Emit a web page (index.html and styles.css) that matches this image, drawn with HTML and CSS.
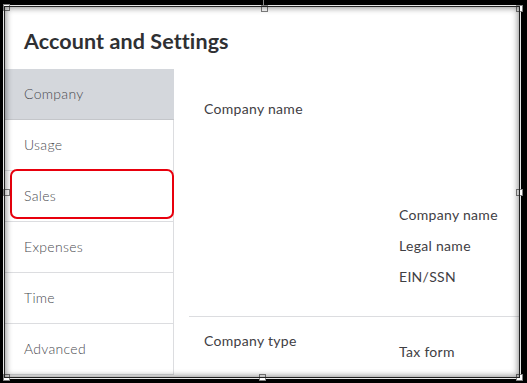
FILE: index.html
```html
<!DOCTYPE html>
<html lang="en">

<head>
    <meta charset="UTF-8">
    <title>Account and Settings</title>
    <link rel="stylesheet" href="styles.css">
</head>

<body>
    <div class="frame">
        <div class="window">
            <div class="header">
                <h1>Account and Settings</h1>
            </div>
            <div class="body">
                <ul class="nav">
                    <li class="active">Company</li>
                    <li>Usage</li>
                    <li class="marked">Sales <span class="annotation"></span></li>
                    <li>Expenses</li>
                    <li>Time</li>
                    <li>Advanced</li>
                </ul>
                <div class="main">
                    <div class="section first">
                        <div class="label">Company name</div>
                        <div class="fields">
                            <div>Company name</div>
                            <div>Legal name</div>
                            <div>EIN/SSN</div>
                        </div>
                    </div>
                    <div class="section second">
                        <div class="label">Company type</div>
                        <div class="fields">
                            <div>Tax form</div>
                        </div>
                    </div>
                </div>
            </div>
        </div>
        <span class="handle tl"></span>
        <span class="handle tm"></span>
        <span class="handle tr"></span>
        <span class="handle ml"></span>
        <span class="handle mr"></span>
        <span class="handle bl"></span>
        <span class="handle bm"></span>
        <span class="handle br"></span>
    </div>
</body>

</html>
```

FILE: styles.css
```css
* {
  box-sizing: border-box;
}

html, body {
  margin: 0;
  height: 100%;
  background: #000;
}

body {
  padding: 5px 6px 4px 3px;
  font: normal 14px/20px Lato, "Open Sans", sans-serif;
  letter-spacing: 0.3px;
  color: #3f4044;
}

.frame {
  position: relative;
  height: 374px;
  border: 1px solid #e6e6e6;
  background: #fff;
}
.frame::before {
  content: "";
  position: absolute;
  left: 259px;
  top: -6px;
  width: 1px;
  height: 6px;
  background: #888;
}
.frame::after {
  content: "";
  position: absolute;
  top: 0;
  right: 0;
  bottom: 0;
  left: 0;
  box-shadow: inset 0 0 0 1px #222, inset 0 0 6px 2px rgba(0, 0, 0, 0.45);
  pointer-events: none;
}

.window {
  height: 100%;
  overflow: hidden;
}

.header {
  height: 63px;
  padding: 0 0 0 20px;
}
.header h1 {
  margin: 0;
  padding-top: 23px;
  font: bold 21.5px/24px Lato, sans-serif;
  letter-spacing: 0.1px;
  color: #2f3033;
}

.body {
  display: flex;
}

.nav {
  width: 170px;
  margin: 0;
  padding: 0;
  list-style: none;
  border-right: 1px solid #dcdde0;
}
.nav li {
  position: relative;
  height: 51px;
  padding: 0 20px;
  line-height: 50px;
  font-weight: 300;
  color: #4a4b50;
  border-bottom: 1px solid #dcdde0;
}
.nav .active {
  background: #d4d7dc;
  margin-right: -1px;
  border-bottom-color: #c4c6ca;
}

.annotation {
  position: absolute;
  top: -2px;
  left: 6px;
  width: 164px;
  height: 50px;
  border: 2px solid #e8000d;
  border-radius: 7px;
}

.main {
  flex: 1;
  padding-left: 15px;
}

.section {
  display: flex;
  padding-left: 15px;
}
.section .label {
  width: 195px;
}
.section .fields {
  display: flex;
  flex-direction: column;
  gap: 11px;
}
.section.first {
  padding-top: 30px;
  padding-bottom: 29px;
  border-bottom: 1px solid #dcdde0;
}
.section.first .fields {
  padding-top: 106px;
}
.section.second {
  padding-top: 14px;
}
.section.second .fields {
  padding-top: 11px;
}

.handle {
  position: absolute;
  width: 7px;
  height: 7px;
  background: #fff;
  border: 1px solid #808080;
}
.tl { left: -1px; top: -2px; }
.tm { left: 257px; top: -1px; }
.tr { left: 512px; top: -1px; }
.ml { left: -1px; top: 183px; }
.mr { left: 512px; top: 183px; }
.bl { left: -1px; top: 368px; }
.bm { left: 255px; top: 368px; }
.br { left: 512px; top: 368px; }
```
